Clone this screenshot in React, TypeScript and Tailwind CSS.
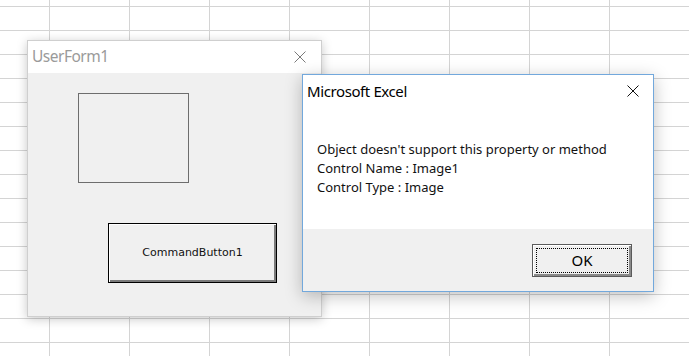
import React from 'react';

function CloseIcon({ color }: { color: string }) {
  return (
    <svg width="12" height="12" viewBox="0 0 12 12" className="shrink-0">
      <path d="M0.5 0.5 L11.5 11.5 M11.5 0.5 L0.5 11.5" stroke={color} strokeWidth="1" fill="none" />
    </svg>
  );
}

export default function App() {
  return (
    <div className="relative h-[356px] w-[689px] overflow-hidden bg-white bg-[linear-gradient(to_right,#d4d4d4_1px,transparent_1px),linear-gradient(to_bottom,#d4d4d4_1px,transparent_1px)] bg-[size:80px_24px] bg-[position:49px_6px] font-['Noto_Sans','Open_Sans',sans-serif]">
      {/* designer window */}
      <div className="absolute left-[27px] top-[40px] flex h-[277px] w-[295px] flex-col border border-[#cfcfcf] shadow-[0_2px_10px_rgba(0,0,0,0.22)]">
        <div className="flex h-[32px] items-center justify-between bg-white pl-[4px] pr-[15px]">
          <span className="text-[15.5px] leading-none tracking-[-0.5px] text-[#9a9a9a]">UserForm1</span>
          <CloseIcon color="#7a7a7a" />
        </div>
        <div className="flex-1 bg-[#f0f0f0]">
          <div className="ml-[50px] mt-[20px] h-[90px] w-[111px] border border-[#6d6d6d]" />
          <div className="ml-[80px] mt-[40px] flex h-[60px] w-[169px] items-center justify-center border border-black bg-[#f0f0f0] shadow-[inset_1px_1px_0_#ffffff,inset_-2px_-2px_0_#7a7a7a]">
            <span className="font-['DejaVu_Sans',sans-serif] text-[11px] text-[#111]">CommandButton1</span>
          </div>
        </div>
      </div>

      {/* message box */}
      <div className="absolute left-[302px] top-[74px] flex h-[218px] w-[352px] flex-col border border-[#72a8dc] bg-white shadow-[0_4px_16px_rgba(0,0,0,0.25)]">
        <div className="flex h-[32px] items-center justify-between pl-[4px] pr-[14px]">
          <span className="text-[15px] leading-none tracking-[-0.4px] text-black">Microsoft Excel</span>
          <CloseIcon color="#111111" />
        </div>
        <div className="flex-1 pl-[14px] pt-[33px] text-[13px] leading-[19px] text-[#111]">
          <div>Object doesn't support this property or method</div>
          <div>Control Name : Image1</div>
          <div>Control Type : Image</div>
        </div>
        <div className="flex h-[62px] justify-end bg-[#f0f0f0] pr-[21px] pt-[15px]">
          <div className="flex h-[33px] w-[100px] items-center justify-center border border-[#5a5a5a] bg-[#f0f0f0] p-[3px] shadow-[inset_1px_1px_0_#ffffff,inset_-2px_-2px_0_#8a8a8a]">
            <div className="flex h-full w-full items-center justify-center border border-dotted border-black">
              <span className="text-[15px] leading-none text-black">OK</span>
            </div>
          </div>
        </div>
      </div>
    </div>
  );
}
